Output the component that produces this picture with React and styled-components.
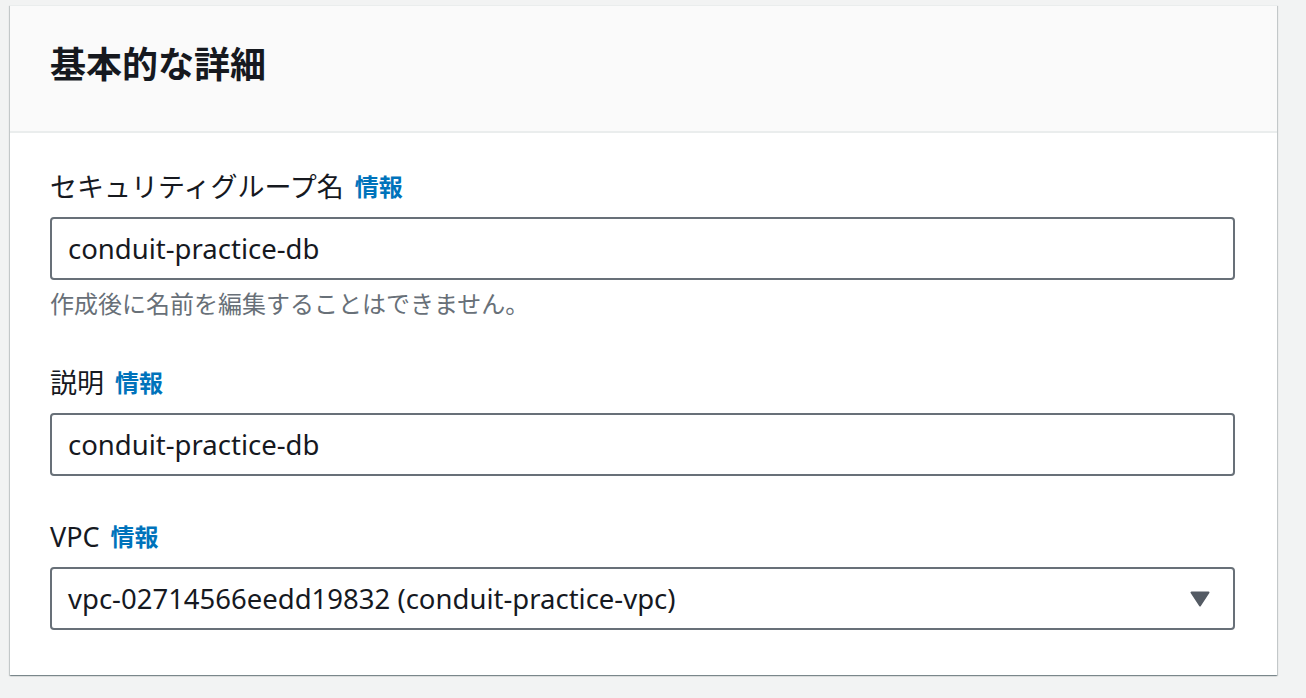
import React from 'react'
import styled, { createGlobalStyle } from 'styled-components'

const GlobalStyle = createGlobalStyle`
  html, body {
    margin: 0;
    padding: 0;
    background: #f2f3f3;
  }
  body {
    font-family: 'Noto Sans', 'Noto Sans CJK JP', sans-serif;
    color: #16191f;
  }
`

const Page = styled.div`
  box-sizing: border-box;
  width: 1306px;
  height: 698px;
  padding: 5px 29px 0 10px;
`

const Card = styled.section`
  background: #fff;
  box-shadow: 0 1px 1px 0 rgba(0, 28, 36, 0.3), 1px 1px 1px 0 rgba(0, 28, 36, 0.15),
    -1px 1px 1px 0 rgba(0, 28, 36, 0.15);
  border-top: 1px solid #eaeded;
`

const CardHeader = styled.header`
  background: #fafafa;
  border-bottom: 2px solid #eaeded;
  padding: 37px 40px 44px;
  h2 {
    margin: 0;
    font-size: 36px;
    line-height: 44px;
    font-weight: 700;
    color: #16191f;
  }
`

const CardBody = styled.div`
  display: flex;
  flex-direction: column;
  gap: 41px;
  padding: 34px 42px 45px 40px;
`

const Field = styled.div`
  display: flex;
  flex-direction: column;
`

const Label = styled.label`
  display: flex;
  align-items: center;
  font-size: 27px;
  line-height: 40px;
  margin-bottom: 10px;
  color: #16191f;
`

const InfoLink = styled.a`
  margin-left: 11px;
  font-size: 24px;
  font-weight: 700;
  color: #0073bb;
  text-decoration: none;
`

const Control = styled.div`
  box-sizing: border-box;
  height: 63px;
  border: 2px solid #687078;
  border-radius: 4px;
  padding: 0 23px 0 16px;
  display: flex;
  align-items: center;
  justify-content: space-between;
  font-size: 27.5px;
  color: #16191f;
`

const Hint = styled.div`
  margin-top: 6px;
  font-size: 24px;
  line-height: 36px;
  color: #687078;
`

const Caret = () => (
  <svg width="20" height="16" viewBox="0 0 20 16">
    <path d="M1.5 1.5 H18.5 L10 14.5 Z" fill="#545b64" stroke="#545b64" strokeWidth="2" strokeLinejoin="round" />
  </svg>
)

const FormField = ({ label, hint, children }) => (
  <Field>
    <Label>
      {label}
      <InfoLink href="#">情報</InfoLink>
    </Label>
    {children}
    {hint && <Hint>{hint}</Hint>}
  </Field>
)

const App = () => {
  return (
    <>
      <GlobalStyle />
      <Page>
        <Card>
          <CardHeader>
            <h2>基本的な詳細</h2>
          </CardHeader>
          <CardBody>
            <FormField label="セキュリティグループ名" hint="作成後に名前を編集することはできません。">
              <Control>conduit-practice-db</Control>
            </FormField>
            <FormField label="説明">
              <Control>conduit-practice-db</Control>
            </FormField>
            <FormField label="VPC">
              <Control>
                <span>vpc-02714566eedd19832 (conduit-practice-vpc)</span>
                <Caret />
              </Control>
            </FormField>
          </CardBody>
        </Card>
      </Page>
    </>
  )
}

export default App
